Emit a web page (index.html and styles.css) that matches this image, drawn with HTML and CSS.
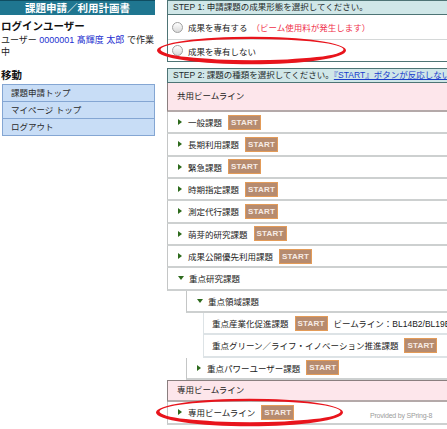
FILE: index.html
```html
<!DOCTYPE html>
<html lang="ja">
<head>
<meta charset="utf-8">
<title>課題申請／利用計画書</title>
<link rel="stylesheet" href="styles.css">
</head>
<body>
<div class="page">
  <aside class="side">
    <div class="side-title">課題申請／利用計画書</div>
    <h2 class="side-h">ログインユーザー</h2>
    <p class="user">ユーザー <a class="user-link">0000001 髙輝度 太郎</a> で作業中</p>
    <h2 class="side-h move">移動</h2>
    <ul class="menu">
      <li>課題申請トップ</li>
      <li>マイページ トップ</li>
      <li>ログアウト</li>
    </ul>
  </aside>
  <main class="main">
    <section class="step step1">
      <div class="step-head">STEP 1: 申請課題の成果形態を選択してください。</div>
      <label class="opt opt1"><span class="radio"></span>成果を専有する<span class="warn">（ビーム使用料が発生します）</span></label>
      <label class="opt opt2"><span class="radio"></span>成果を専有しない</label>
    </section>
    <section class="step step2">
      <div class="step-head">STEP 2: 課題の種類を選択してください。<a class="help">『START』ボタンが反応しない場合はこちら</a></div>
      <div class="group-head first">共用ビームライン</div>
      <div class="row"><span class="tri"></span>一般課題<span class="start">START</span></div>
      <div class="row"><span class="tri"></span>長期利用課題<span class="start">START</span></div>
      <div class="row"><span class="tri"></span>緊急課題<span class="start">START</span></div>
      <div class="row"><span class="tri"></span>時期指定課題<span class="start">START</span></div>
      <div class="row"><span class="tri"></span>測定代行課題<span class="start">START</span></div>
      <div class="row"><span class="tri"></span>萌芽的研究課題<span class="start">START</span></div>
      <div class="row"><span class="tri"></span>成果公開優先利用課題<span class="start">START</span></div>
      <div class="row"><span class="tri down"></span>重点研究課題</div>
      <div class="sub">
        <div class="row"><span class="tri down"></span>重点領域課題</div>
        <div class="sub2">
          <div class="row">重点産業化促進課題<span class="start">START</span><span class="bl">ビームライン：BL14B2/BL19B2</span></div>
          <div class="row">重点グリーン／ライフ・イノベーション推進課題<span class="start">START</span></div>
        </div>
        <div class="row"><span class="tri"></span>重点パワーユーザー課題<span class="start">START</span></div>
      </div>
      <div class="group-head">専用ビームライン</div>
      <div class="row"><span class="tri"></span>専用ビームライン<span class="start">START</span></div>
    </section>
  </main>
</div>
<div class="credit">Provided by SPring-8</div>
<svg class="marks" width="447" height="429" viewBox="0 0 447 429" xmlns="http://www.w3.org/2000/svg">
  <path fill="#e8141c" fill-rule="evenodd" d="M157,50.5 a94.5,13.8 0 1,0 189,0 a94.5,13.8 0 1,0 -189,0 Z M160.5,49.6 a91.5,10.6 0 1,0 183,0 a91.5,10.6 0 1,0 -183,0 Z"/>
  <path fill="#e8141c" fill-rule="evenodd" d="M156,412.5 a93.5,13.8 0 1,0 187,0 a93.5,13.8 0 1,0 -187,0 Z M159.5,411.6 a90.5,10.6 0 1,0 181,0 a90.5,10.6 0 1,0 -181,0 Z"/>
</svg>
</body>
</html>
```
FILE: styles.css
```css
html, body {
  margin: 0;
  padding: 0;
  overflow: hidden;
  background: #fff;
}
body {
  width: 447px;
  height: 429px;
  position: relative;
  font-family: "Liberation Sans", "Noto Sans CJK JP", sans-serif;
  font-size: 8.5px;
  color: #1a1a1a;
}
.page {
  display: flex;
  gap: 12px;
  width: 900px;
  align-items: flex-start;
}

/* sidebar */
.side {
  width: 155px;
  flex: none;
}
.side-title {
  height: 14px;
  line-height: 14px;
  background: #1f7690;
  border-top: 1px solid #0f4d61;
  color: #fff;
  font-weight: bold;
  font-size: 10.5px;
  text-align: center;
}
.side-h {
  margin: 4px 0 0 1px;
  font-size: 10.5px;
  line-height: 14px;
  font-weight: bold;
  color: #111;
}
.side-h.move {
  margin-top: 10px;
}
.user {
  margin: 1px 0 0 1px;
  font-size: 9px;
  line-height: 12px;
  color: #222;
}
.user-link {
  color: #1c2fd0;
}
.menu {
  list-style: none;
  margin: 2px 0 0 2px;
  padding: 0;
  border: 1px solid #84a6d3;
  background: #c8ddf6;
}
.menu li {
  height: 16px;
  line-height: 16px;
  padding-left: 8px;
  color: #2a2a2a;
  border-top: 1px solid #84a6d3;
}
.menu li:first-child {
  border-top: none;
}

/* main */
.main {
  width: 700px;
  flex: none;
}
.step1 {
  border: 1px solid #4e7475;
}
.step-head {
  height: 13px;
  line-height: 13px;
  background: #d0e7e8;
  padding-left: 5px;
  color: #1e2a2a;
  border-bottom: 1px solid #4e7475;
  white-space: nowrap;
}
.opt {
  display: flex;
  align-items: center;
  padding-left: 4px;
  color: #1a1a1a;
}
.opt1 {
  height: 24px;
  border-bottom: 1px solid #d5d8d8;
}
.opt2 {
  height: 21px;
}
.radio {
  width: 9px;
  height: 9px;
  border: 1px solid #a0a0a0;
  border-radius: 50%;
  background: linear-gradient(#ffffff, #d9d9d9);
  margin-right: 5px;
}
.warn {
  color: #f0304a;
  margin-left: 4px;
}
.step2 {
  margin-top: 6px;
}
.step2 .step-head {
  border: 1px solid #4e7475;
}
.help {
  color: #1a3ccc;
  text-decoration: underline;
}
.group-head {
  height: 19.33px;
  line-height: 19.33px;
  padding-left: 9px;
  background: #fde6eb;
  border-top: 1px solid #8a7f7f;
  border-left: 1px solid #8a7f7f;
  border-bottom: 2px solid #b4a9a9;
  color: #1a1a1a;
}
.group-head.first {
  height: 27px;
  line-height: 27px;
  border-top: none;
}
.row {
  height: 20.33px;
  display: flex;
  align-items: center;
  padding-left: 10px;
  border-left: 1px solid #c4c6c6;
  border-bottom: 2px solid #cdd0d0;
  background: #fff;
  white-space: nowrap;
  color: #1a1a1a;
}
.tri {
  width: 0;
  height: 0;
  border-left: 4px solid #2d6a1c;
  border-top: 3px solid transparent;
  border-bottom: 3px solid transparent;
  margin-right: 6px;
}
.tri.down {
  border-left: 3px solid transparent;
  border-right: 3px solid transparent;
  border-top: 4px solid #2d6a1c;
  border-bottom: none;
  margin-right: 5px;
}
.sub {
  margin-left: 19px;
}
.sub2 {
  margin-left: 17px;
}
.sub2 .row {
  padding-left: 8px;
  border-left-color: #dde3e6;
  border-bottom-color: #dde3e6;
}
.start {
  display: inline-block;
  width: 31px;
  height: 13px;
  line-height: 13px;
  margin-left: 6px;
  background: #b68b6f;
  border: 1px solid #e39b58;
  color: #f6ece6;
  font-family: "Liberation Sans", sans-serif;
  font-weight: bold;
  font-size: 8px;
  text-align: center;
  letter-spacing: 0.2px;
}
.bl {
  margin-left: 6px;
}
.credit {
  position: absolute;
  left: 370px;
  top: 412px;
  font-family: "Liberation Sans", sans-serif;
  font-size: 7px;
  color: #9c9c9c;
  letter-spacing: -0.2px;
}
.marks {
  position: absolute;
  left: 0;
  top: 0;
  pointer-events: none;
}
```
